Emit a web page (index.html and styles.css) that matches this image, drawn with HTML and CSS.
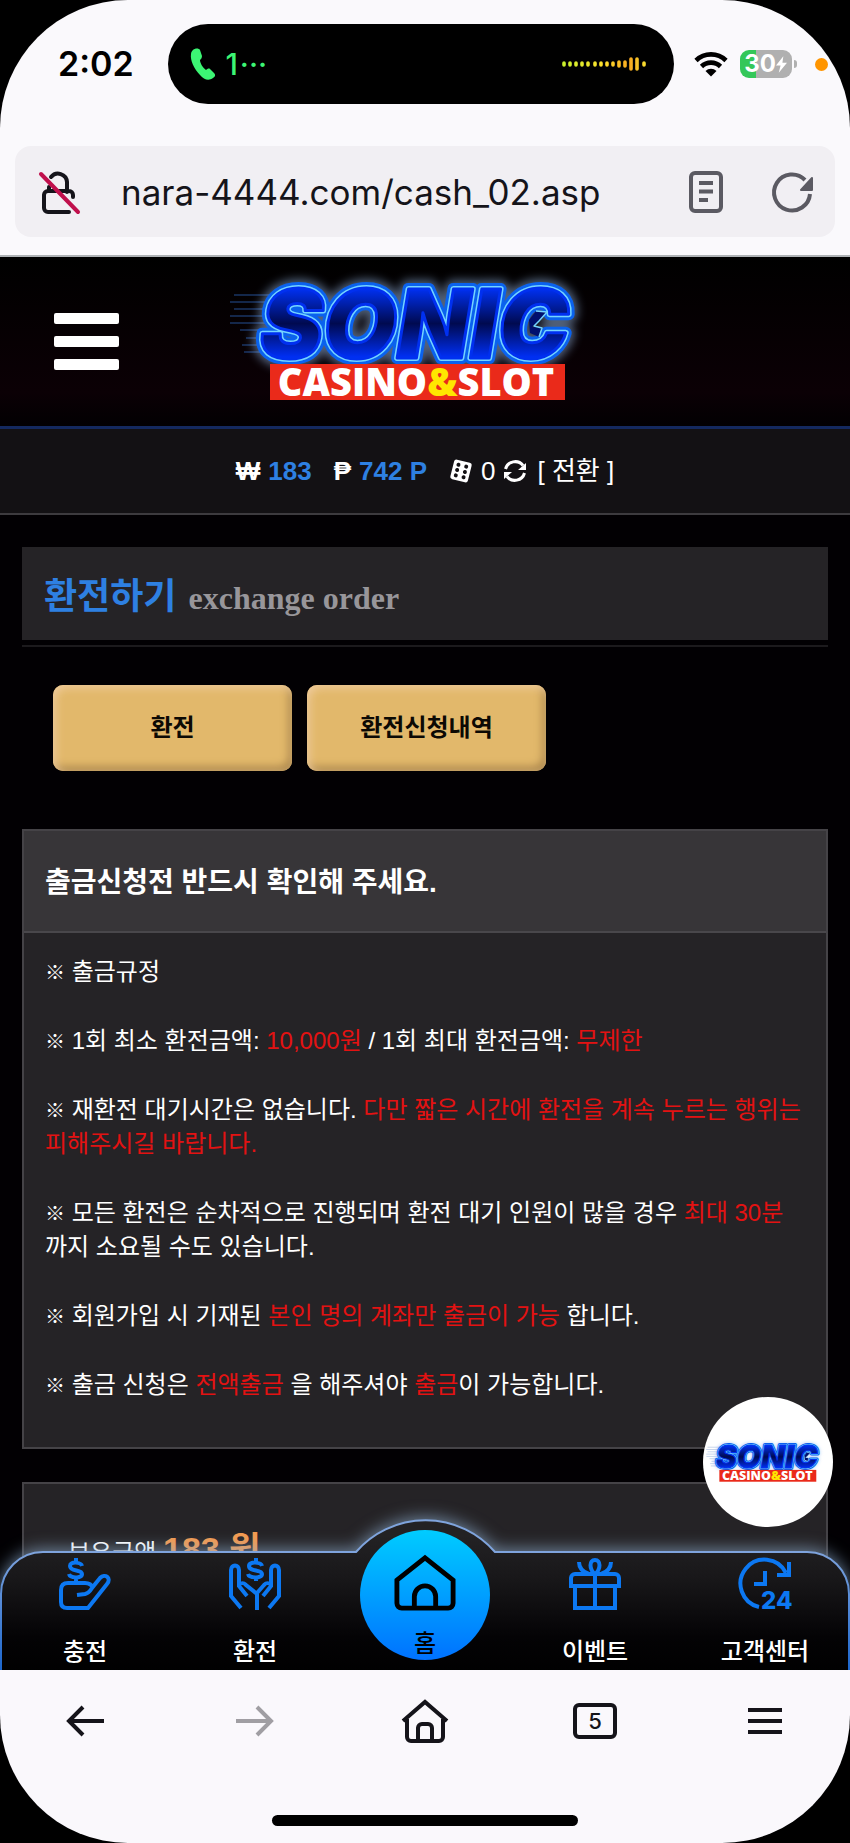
FILE: index.html
```html
<!DOCTYPE html>
<html lang="ko">
<head>
<meta charset="utf-8">
<meta name="viewport" content="width=device-width, initial-scale=1">
<title>환전하기</title>
<link rel="stylesheet" href="styles.css">
</head>
<body>
<svg class="defs" aria-hidden="true">
  <defs>
    <linearGradient id="letters" x1="0" y1="0" x2="0" y2="1">
      <stop offset="0.2" stop-color="#0030f0"/>
      <stop offset="0.5" stop-color="#000a50"/>
      <stop offset="0.8" stop-color="#0030f8"/>
    </linearGradient>
    <filter id="glow" x="-20%" y="-40%" width="140%" height="180%">
      <feGaussianBlur stdDeviation="5"/>
    </filter>
    <symbol id="logo" viewBox="0 0 370 140">
      <g stroke="#2d62b8" stroke-width="1" opacity="0.8">
        <path d="M4 25H60M-2 32H60M4 39H56M-4 46H56M0 53H56M10 60H50M16 68H50M12 75H50M14 82H50"/>
      </g>
      <text class="logo-word" x="30" y="88" stroke="#9fc4f5" stroke-width="18" opacity="0.5" filter="url(#glow)">SONIC</text>
      <text class="logo-word" x="30" y="88" stroke="#0a62ee" stroke-width="12">SONIC</text>
      <text class="logo-word" x="30" y="88" stroke="#74d4ff" stroke-width="6">SONIC</text>
      <text class="logo-word solid" x="30" y="88" stroke="#0030f0" stroke-width="3">SONIC</text>
      <path d="M306 41L317 42L309 51L302 57L312 58L309 67L300 63L299 50z" fill="#000f6e"/>
      <path d="M306 41L317 42L309 51L304 56L312 58L309 67" fill="none" stroke="#74d4ff" stroke-width="1.5" stroke-linejoin="round"/>
      <rect x="40" y="94" width="295" height="36" fill="#ea2a1a"/>
      <text class="logo-sub" x="186" y="126" text-anchor="middle">CASINO<tspan fill="#ffe600">&amp;</tspan>SLOT</text>
    </symbol>
  </defs>
</svg>

<header class="browser-top">
  <div class="status">
    <div class="clock">2:02</div>
    <div class="island">
      <svg class="phone" viewBox="0 0 24 32"><path d="M2 2C4 0 8 0 9 2l2 6c0 2-1 3-2 4 0 3 3 8 6 10 1-1 3-2 4-1l4 4c2 2 1 4-1 5-4 3-9 2-13-3C3 21-1 12 0 6c0-2 1-3 2-4z" fill="#3cf574"/></svg>
      <span class="call">1<span class="dots">···</span></span>
      <svg class="wave" viewBox="0 0 84 16">
        <defs><linearGradient id="wv" gradientUnits="userSpaceOnUse" x1="0" y1="0" x2="84" y2="0"><stop offset="0" stop-color="#c8f02c"/><stop offset="0.5" stop-color="#ffe02c"/><stop offset="0.8" stop-color="#f8a820"/><stop offset="1" stop-color="#f8e030"/></linearGradient></defs>
        <path d="M2 7v2M8 7v2M14 7v2M20 7v2M26 7v2M33 7v2M39 7v2M45 7v2M51 7v2M57 6v4M63 6v4M69 3v10M75 3v10M82 7v2" stroke="url(#wv)" stroke-width="3.6" stroke-linecap="round"/>
      </svg>
    </div>
    <div class="indicators">
      <svg class="wifi" viewBox="0 0 34 26" fill="none" stroke="#000" stroke-width="4.6"><path d="M2 9.500a21.500 21.500 0 0 1 30 0M7.500 15.500a13.500 13.500 0 0 1 19 0"/><path d="M11.500 20a8 8 0 0 1 11 0L17 25.500z" fill="#000" stroke="none"/></svg>
      <div class="battery"><span>30</span><svg viewBox="0 0 12 18"><path d="M8 0L0 10h5L3 18 12 7H7z" fill="#fff"/></svg></div>
      <div class="mic"></div>
    </div>
  </div>
  <div class="address">
    <svg class="lock" viewBox="0 0 42 44" fill="none" stroke="#15141a" stroke-width="4" stroke-linecap="round"><path d="M12 7a9 9 0 0 1 16 5v10M10 17v4M34 27v-2a4 4 0 0 0-4-4H9a4 4 0 0 0-4 4v13a4 4 0 0 0 4 4h21"/><path d="M2 4l37 38" stroke="#c0104c"/></svg>
    <input class="url" type="text" aria-label="주소" value="nara-4444.com/cash_02.asp">
    <button class="plain" aria-label="리더"><svg class="reader" viewBox="0 0 34 42" fill="none" stroke="#5b5a62" stroke-width="4"><rect x="2" y="2" width="30" height="38" rx="4"/><path d="M10 12h14M10 20.500h14M10 29h9"/></svg></button>
    <button class="plain" aria-label="새로고침"><svg class="reload" viewBox="0 0 44 42" fill="none" stroke="#5b5a62" stroke-width="4"><path d="M39 23A18 18 0 1 1 34 9"/><path d="M41 7v12H30z" fill="#5b5a62" stroke-width="2" stroke-linejoin="round"/></svg></button>
  </div>
</header>

<div class="site">
  <header class="site-head">
    <button class="burger" aria-label="메뉴"><i></i><i></i><i></i></button>
    <svg class="brand" viewBox="0 0 370 140" role="img" aria-label="SONIC CASINO&amp;SLOT"><use href="#logo"/></svg>
  </header>
  <div class="wallet">
    <b>₩</b><b class="sum">183</b>
    <b class="point">₱</b><b class="sum">742 P</b>
    <svg class="dice" viewBox="0 0 24 24"><g transform="rotate(14 12 12)"><rect x="3" y="2" width="18" height="20" rx="2.500" fill="#fff"/><g fill="#131114"><circle cx="8" cy="6.500" r="2"/><circle cx="16" cy="6.500" r="2"/><circle cx="8" cy="12" r="2"/><circle cx="16" cy="12" r="2"/><circle cx="8" cy="17.500" r="2"/><circle cx="16" cy="17.500" r="2"/></g></g></svg>
    <span>0</span>
    <button class="swap"><svg viewBox="0 0 24 24"><g fill="none" stroke="#fff" stroke-width="3"><path d="M2.500 10A10 10 0 0 1 20 6.500M21.500 14A10 10 0 0 1 4 17.500"/></g><path d="M23 4v7h-8zM1 20v-7h8z" fill="#fff"/></svg>[ 전환 ]</button>
  </div>

  <main>
    <h1 class="title">환전하기 <small>exchange order</small></h1>
    <div class="tabs"><button>환전</button><button>환전신청내역</button></div>

    <section class="card">
      <h2>출금신청전 반드시 확인해 주세요.</h2>
      <div class="rules">
        <p><i>※</i> 출금규정</p>
        <p><i>※</i> 1회 최소 환전금액: <em>10,000원</em> / 1회 최대 환전금액: <em>무제한</em></p>
        <p><i>※</i> 재환전 대기시간은 없습니다. <em>다만 짧은 시간에 환전을 계속 누르는 행위는<br>피해주시길 바랍니다.</em></p>
        <p><i>※</i> 모든 환전은 순차적으로 진행되며 환전 대기 인원이 많을 경우 <em>최대 30분</em><br>까지 소요될 수도 있습니다.</p>
        <p><i>※</i> 회원가입 시 기재된 <em>본인 명의 계좌만 출금이 가능</em> 합니다.</p>
        <p><i>※</i> 출금 신청은 <em>전액출금</em> 을 해주셔야 <em>출금</em>이 가능합니다.</p>
      </div>
    </section>
    <section class="card balance">보유금액 <strong>183 원</strong></section>
  </main>

  <button class="float" aria-label="SONIC CASINO&amp;SLOT"><svg viewBox="0 0 370 140"><use href="#logo"/></svg></button>

  <nav class="dock">
    <svg class="dock-bg" viewBox="0 0 850 170" preserveAspectRatio="none" aria-hidden="true">
      <defs>
        <linearGradient id="dk" x1="0" y1="0" x2="0" y2="1"><stop offset="0.1" stop-color="#232224"/><stop offset="0.4" stop-color="#171618"/><stop offset="0.75" stop-color="#040305"/><stop offset="1" stop-color="#000"/></linearGradient>
        <linearGradient id="edge" x1="0" y1="0" x2="0" y2="1"><stop offset="0.2" stop-color="#7fa4dd"/><stop offset="1" stop-color="#1763cc"/></linearGradient>
      </defs>
      <path d="M1 176V94A42 42 0 0 1 43 52H356A92 92 0 0 1 495 52H807A42 42 0 0 1 849 94V176z" fill="url(#dk)" stroke="url(#edge)" stroke-width="2"/>
    </svg>
    <a href="#"><svg viewBox="0 0 52 52"><path d="M34 30q-2-5-8-5H9q-7 0-7 7v12q0 6 6 6h21l19-24c5-6-2-11-7-6L33 30q-3 5-7 6l-8 1M23 8c-1-4-12-5-12 0 0 6 12 3 12 8 0 5-12 4-13 0M17 0v4M17 20v5"/></svg><span>충전</span></a>
    <a href="#"><svg viewBox="0 0 52 52"><path d="M12 50L2 38V12c0-6 8-6 8 0v16l8 10M10 27c3-3 5-2 7 0l11 9v16M40 50L50 38V12c0-6-8-6-8 0v16l-8 10M42 27c-3-3-5-2-7 0l-7 8M33 8c-1-4-13-5-13 0 0 6 13 3 13 8 0 5-13 4-14 0M27 0v4M27 19v4"/></svg><span>환전</span></a>
    <a href="#" class="home"><svg viewBox="0 0 64 58"><path d="M3 26L32 3l29 23v24a5 5 0 0 1-5 5H8a5 5 0 0 1-5-5zM21 55V43a11 11 0 0 1 22 0v12"/></svg><span>홈</span></a>
    <a href="#"><svg viewBox="0 0 52 52"><path d="M6 28v22h40V28M26 16v34M2 28h48v-8a4 4 0 0 0-4-4H6a4 4 0 0 0-4 4zM10 4c0 6 4 10 10 12M42 4c0 6-4 10-10 12M26 16c-6-5-6-14 0-14s6 9 0 14"/></svg><span>이벤트</span></a>
    <a href="#"><svg viewBox="0 0 52 52"><path d="M20 49A24 24 0 1 1 47 15M50 4v13H38M26 13v13H15"/><text x="22" y="51">24</text></svg><span>고객센터</span></a>
  </nav>
</div>

<footer class="browser-bottom">
  <div class="tools">
    <button class="plain" aria-label="뒤로"><svg class="arrow" viewBox="0 0 38 32"><path d="M38 16H3M17 2L3 16l14 14"/></svg></button>
    <button class="plain" aria-label="앞으로" disabled><svg class="arrow" viewBox="0 0 38 32"><path d="M0 16h35M21 2l14 14-14 14"/></svg></button>
    <button class="plain" aria-label="홈"><svg class="house" viewBox="0 0 48 44"><path d="M2 22L24 3l22 19M6 20v18a4 4 0 0 0 4 4h28a4 4 0 0 0 4-4V20M17 42V29a4 4 0 0 1 4-4h6a4 4 0 0 1 4 4v13"/></svg></button>
    <button class="plain count" aria-label="탭">5</button>
    <button class="plain" aria-label="메뉴"><svg class="lines" viewBox="0 0 34 28"><path d="M0 3h34M0 14h34M0 25h34"/></svg></button>
  </div>
  <div class="bar"></div>
</footer>
</body>
</html>
```
FILE: styles.css
```css
* { box-sizing: border-box; }
html { background: #000; }
body {
  margin: 0;
  min-height: 100vh;
  display: flex;
  flex-direction: column;
  background: #000;
  color: #fff;
  font: 24px/34px "Liberation Sans", "Noto Sans CJK KR", sans-serif;
}
button, input { font: inherit; color: inherit; border: 0; background: none; padding: 0; }
a { color: inherit; text-decoration: none; }
svg { display: block; overflow: visible; }
.defs { position: absolute; width: 0; height: 0; }
.plain { display: flex; align-items: center; justify-content: center; }

.browser-top {
  background: #faf9fc;
  color: #15141a;
  border-radius: 128px 128px 0 0;
  border-bottom: 2px solid #aeb2b5;
  padding: 24px 15px 18px;
  display: flex;
  flex-direction: column;
  gap: 42px;
}
.status { display: grid; grid-template-columns: 1fr 60% 1fr; margin: 0 -7px 0 -15px; height: 80px; align-items: center; }
.clock { font: 600 34px/40px Inter, sans-serif; color: #000; padding-left: 58px; }
.island { height: 80px; border-radius: 40px; background: #000; display: flex; align-items: center; padding: 0 28px 0 23px; }
.phone { width: 24px; height: 32px; }
.call { font: 500 30px/32px Inter, sans-serif; color: #3cf574; margin-left: 10px; flex: 1; }
.dots { margin-left: 2px; }
.wave { width: 84px; height: 16px; }
.indicators { display: flex; align-items: center; padding-left: 20px; }
.wifi { width: 34px; height: 26px; margin-right: 12px; flex: none; }
.battery {
  position: relative;
  display: flex;
  align-items: center;
  justify-content: center;
  width: 52px;
  height: 28px;
  flex: none;
  border-radius: 9px;
  background: linear-gradient(90deg, #34c759 31%, #b0b0b0 31%);
  color: #fff;
  font: 700 24px/28px Inter, sans-serif;
}
.battery svg { width: 11px; height: 17px; }
.battery::after { content: ""; position: absolute; right: -5px; top: 10px; width: 3px; height: 8px; border-radius: 0 3px 3px 0; background: #b0b0b0; }
.mic { width: 13px; height: 13px; border-radius: 50%; background: #ff9500; margin-left: 23px; flex: none; }
.address { height: 91px; border-radius: 16px; background: #f1eff3; display: flex; align-items: center; padding: 0 20px 0 24px; }
.lock { width: 42px; height: 44px; flex: none; }
.url { flex: 1; min-width: 0; margin-left: 40px; font: 35px/48px Inter, sans-serif; }
.reader { width: 34px; height: 42px; }
.reload { width: 44px; height: 42px; margin-left: 48px; }

.site { flex: 1; position: relative; overflow: hidden; display: flex; flex-direction: column; background: #020003; }
.site-head {
  height: 172px;
  border-bottom: 3px solid #14295f;
  background: linear-gradient(#000, #0b0005 80%, #020002);
  display: grid;
  grid-template-columns: 1fr auto 1fr;
  align-items: center;
}
.burger { display: flex; flex-direction: column; gap: 12px; width: 65px; margin-left: 54px; }
.burger i { height: 11px; border-radius: 2px; background: #fff; }
.brand { width: 370px; height: 140px; margin: 0 20px 4px 0; }
.logo-word { font: italic 900 95px Inter, sans-serif; fill: none; stroke-linejoin: round; }
.solid { fill: url(#letters); }
.logo-sub { font: 800 38px "Open Sans", sans-serif; fill: #fff; }
.wallet {
  height: 86px;
  background: #131114;
  border-bottom: 2px solid #3d3b3f;
  display: flex;
  align-items: center;
  justify-content: center;
  font-size: 26px;
}
.point { margin-left: 22px; }
.sum { color: #2e80e2; margin-left: 8px; }
.dice { width: 24px; height: 24px; margin: 0 8px 0 22px; }
.swap { display: flex; align-items: center; gap: 10px; margin-left: 8px; }
.swap svg { width: 24px; height: 24px; }

main { flex: 1; display: flex; flex-direction: column; padding: 32px 22px 0; }
.title {
  position: relative;
  margin: 0 0 45px;
  height: 93px;
  background: #252326;
  padding: 24px 22px 0;
  display: flex;
  align-items: baseline;
  gap: 12px;
  color: #2e80e2;
  font-size: 36px;
  font-weight: 700;
  line-height: 52px;
}
.title::after { content: ""; position: absolute; left: 0; right: 0; bottom: -7px; height: 2px; background: #1c1a1d; }
.title small { color: #98969a; font: bold 32px/52px "Liberation Serif", serif; }
.tabs { display: flex; gap: 15px; padding: 0 31px; margin-bottom: 58px; }
.tabs button {
  flex: 0 1 239px;
  height: 86px;
  border-radius: 10px;
  background: #e2b86b;
  color: #0c0904;
  font-weight: 700;
  box-shadow: inset 3px 3px 8px #f0cc9c, inset -3px -4px 8px #a8844a;
}
.card { border: 2px solid #454347; background: #252326; }
.card h2 { margin: 0; padding: 32px 21px 28px; background: #373538; border-bottom: 2px solid #49474b; font-size: 28px; line-height: 40px; }
.rules { padding: 22px 8px 45px 21px; display: flex; flex-direction: column; gap: 35px; }
.rules p { margin: 0; }
.rules i { font-size: 20px; font-style: normal; line-height: 20px; }
.rules em { font-style: normal; color: #e31212; }
.balance { flex: 1; margin-top: 33px; padding: 45px 44px; border-bottom: 0; line-height: 40px; }
.balance strong { color: #f39a50; font-size: 34px; }

.float {
  position: absolute;
  right: 17px;
  bottom: 143px;
  width: 130px;
  height: 130px;
  border-radius: 50%;
  background: #fff;
}
.float svg { width: 122px; height: 46px; margin: 0 3px; }
.dock { position: absolute; left: 0; right: 0; bottom: 0; height: 118px; display: grid; grid-template: 118px / repeat(5, 1fr); }
.dock-bg { position: absolute; left: 0; bottom: 0; width: 100%; height: 170px; filter: drop-shadow(0 -2px 8px #8fb0d0aa); }
.dock a { position: relative; display: flex; flex-direction: column; align-items: center; padding-top: 6px; gap: 25px; font-weight: 500; }
.dock a > svg { width: 52px; height: 52px; fill: none; stroke: #0c78f2; stroke-width: 4; }
.dock text { font: 800 24px Inter, sans-serif; fill: #0c78f2; stroke: none; }
.dock .home { align-self: end; justify-self: center; width: 130px; height: 130px; margin-bottom: 10px; padding-top: 23px; gap: 14px; border-radius: 50%; background: linear-gradient(#00ccff, #0072ff); color: #000; }
.dock .home svg { width: 62px; height: 60px; stroke: #000; stroke-width: 5; flex: none; }

.browser-bottom { height: 173px; flex: none; background: #faf8fc; border-radius: 0 0 128px 128px; color: #15141a; display: flex; flex-direction: column; align-items: center; justify-content: space-between; padding: 22px 0 17px; }
.tools { width: 100%; display: grid; grid-template-columns: repeat(5, 1fr); height: 58px; align-items: center; justify-items: center; }
.tools svg { fill: none; stroke: #15141a; stroke-width: 4; }
.tools button:disabled svg { stroke: #a09ea3; }
.arrow { width: 38px; height: 32px; }
.house { width: 48px; height: 44px; }
.lines { width: 34px; height: 28px; }
.count { width: 44px; height: 36px; border: 4px solid #15141a; border-radius: 6px; font: 500 22px/24px Inter, sans-serif; }
.bar { width: 36%; height: 11px; border-radius: 6px; background: #000; }
```
